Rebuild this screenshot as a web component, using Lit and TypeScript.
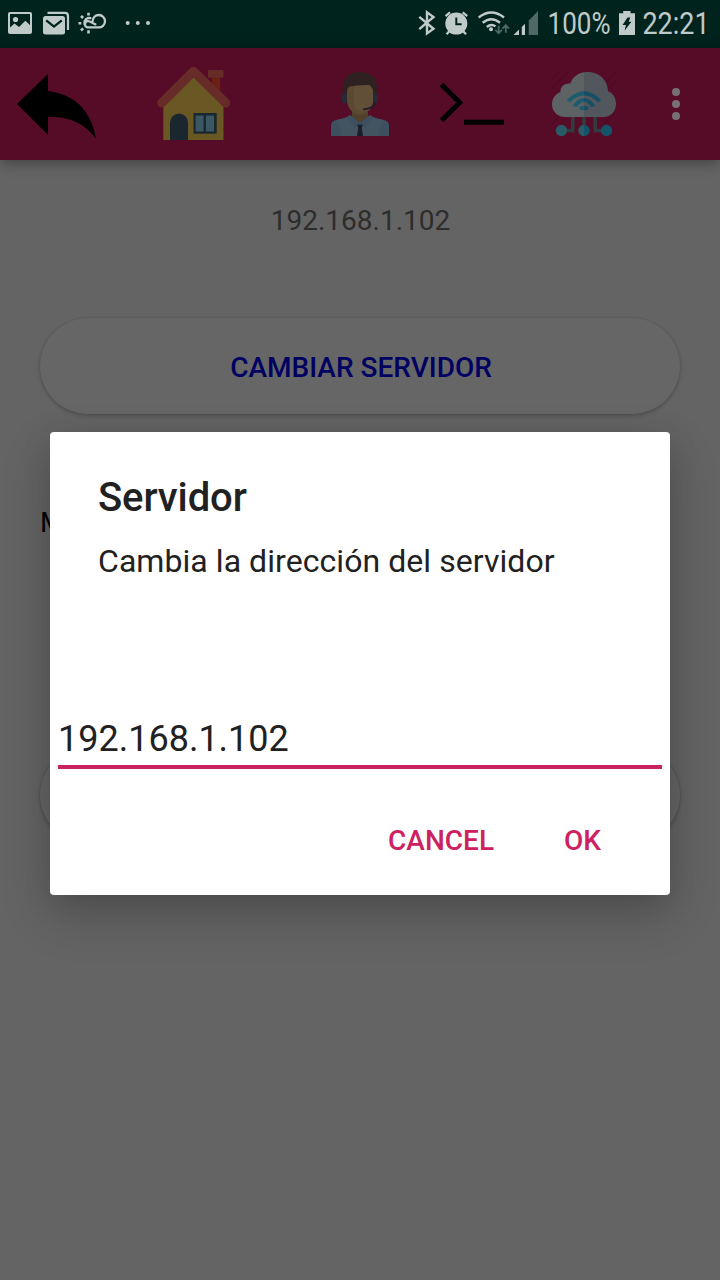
import { LitElement, html, svg, css } from "lit";
import { customElement, state } from "lit/decorators.js";

@customElement("status-bar")
class StatusBar extends LitElement {
  static styles = css`
    :host { display: block; height: 48px; background: #00231d; }
    .row { display: flex; justify-content: space-between; height: 48px; }
    svg { display: block; }
    text { font-family: Roboto, sans-serif; font-size: 30.5px; fill: #c0cbc9; }
  `;
  render() {
    return html`<div class="row">
      <svg width="160" height="48" viewBox="0 0 160 48" fill="#c0cbc9">
        <path fill-rule="evenodd" d="M10 12H30Q32 12 32 14V32Q32 34 30 34H10Q8 34 8 32V14Q8 12 10 12ZM10 14V27.5L14.5 23.5L19 27L25.3 20.8L30 25V14Z"/>
        <circle cx="15.5" cy="19.5" r="2.6"/>
        <path fill="none" stroke="#c0cbc9" stroke-width="2.2" d="M47.5 12.8H65Q68 12.8 68 16V30"/>
        <rect x="43" y="16" width="22" height="18.5" rx="2.5"/>
        <path fill="none" stroke="#00231d" stroke-width="2.3" d="M46.2 20.3L54 26.6L61.8 20.3"/>
        <path fill="none" stroke="#c0cbc9" stroke-width="2.3" stroke-linecap="round" d="M92.6 21.2A6.2 6.2 0 1 1 98.4 27.4H88A3.1 3.1 0 0 1 88 21.2C90.8 21.2 92 23.3 95.4 24.3M84.5 24A4.8 4.8 0 0 1 90.4 18.2"/>
        <path stroke="#c0cbc9" stroke-width="2.6" d="M88.5 12.8V15.6M81 15.9L83.1 18M78.5 23.3H81.3M81 30.5L83.1 28.4M88.5 30.3V33.4"/>
        <circle cx="127.7" cy="23" r="2"/><circle cx="137.8" cy="23" r="2"/><circle cx="148" cy="23" r="2"/>
      </svg>
      <svg width="310" height="48" viewBox="410 0 310 48" fill="#c0cbc9">
        <path fill="none" stroke="#c0cbc9" stroke-width="2.4" d="M419.3 16.8L433.5 28.8L427 33.5V12.3L433.5 17L419.3 29.2"/>
        <circle cx="456.3" cy="23.6" r="11"/>
        <path stroke="#c0cbc9" stroke-width="2.3" d="M445.5 16.2L450 12.4M467.2 16.2L462.7 12.4M449.5 31L446.6 34.3M463 31L466 34.3"/>
        <path fill="none" stroke="#00231d" stroke-width="2" d="M456.3 17.5V24.3H461.7"/>
        <path fill="none" stroke="#c0cbc9" stroke-width="2.4" d="M478.7 17.5Q491.3 7.6 504 17.5M482.7 22.7Q491.3 15.6 500 22.7M486.8 27Q491.3 23.2 495.5 26.4"/>
        <circle cx="491" cy="29.3" r="2"/>
        <path fill="none" stroke="#4e6763" stroke-width="1.8" d="M498.7 25.8V33M495.3 29.8L498.7 33.3L502 29.8M505.8 32.7V25.2M502.5 28.7L505.8 25.1L509 28.7"/>
        <path fill="#506964" d="M528.7 20.5L538 11V35H528.7Z"/>
        <path d="M513.5 35L519 29.6V35ZM521.8 27L525 23.8V35H521.8Z"/>
        <text x="547.5" y="34" textLength="63" lengthAdjust="spacingAndGlyphs">100%</text>
        <path d="M619 13.2H623.2V11H630.5V13.2H635V35H619Z"/>
        <path fill="#00231d" d="M627.5 17.5H630.3L628.7 21.8H631.4L624.5 30.7L626 25H622.6Z"/>
        <text x="642.5" y="34" textLength="67" lengthAdjust="spacingAndGlyphs">22:21</text>
      </svg>
    </div>`;
  }
}

/* One side of the two-tone cloud, clipped at its vertical centre line. */
const cloudHalf = (side: string, body: string, wave: string, node: string) => svg`
  <g clip-path="url(#${side})">
    <path fill=${body} d="M565 117C557 117 552 111 552 104.5C552 98 556 93.5 560.5 92C560 87 564 83.5 570.5 83.3C573 76 580 72 588 72C599 72 608 80.5 608 91.3C613 93 616 98 616 104C616 111 611 117 603.5 117Z"/>
    <path fill="none" stroke=${wave} stroke-width="4" d="M568.2 101.2Q584 85.5 599.8 101.2M574.4 106.4Q584 93.5 593.6 106.4"/>
    <ellipse cx="584" cy="108" rx="4.8" ry="2.2" fill=${wave}/>
    <circle cx="584" cy="130.5" r="5.7" fill=${node}/>
  </g>`;

@customElement("tool-bar")
class ToolBar extends LitElement {
  static styles = css`
    :host { display: block; height: 112px; background: #560b26; box-shadow: 0 4px 10px rgba(0,0,0,.22), 0 2px 18px rgba(0,0,0,.1); }
    .row { display: flex; }
    svg { display: block; }
  `;
  render() {
    return html`<div class="row">
      <svg width="120" height="112" viewBox="0 48 120 112">
        <path d="M17 104L48 74V91C73 94 91 109 96 138.5C82 121 68 117 48 116.7V134.7Z"/>
      </svg>
      <svg width="160" height="112" viewBox="120 48 160 112">
        <path fill="#6a2015" d="M212 76H220.3V94H212Z"/>
        <rect x="208" y="70" width="15.5" height="7.8" rx=".8" fill="#672c27"/>
        <path fill="#695724" d="M163.3 101L193.5 72L223.5 101V140H163.3Z"/>
        <path fill="none" stroke="#672c27" stroke-width="9" stroke-linecap="round" stroke-linejoin="round" d="M161.7 103L193.5 71.3L225.8 103"/>
        <path fill="#1a272f" d="M170 140V122.5A9 9 0 0 1 188 122.5V140Z"/>
        <path fill="#1a272f" d="M193.5 113H216.7V133.7H193.5Z"/>
        <path fill="#3a5763" d="M195.6 115.5H203.6V131.5H195.6ZM206 115.5H214V131.5H206Z"/>
      </svg>
      <svg width="140" height="112" viewBox="280 48 140 112">
        <path fill="#2f2122" d="M342.5 97V90C342.5 77 350 72 360 72S377.5 77 377.5 90V97Z"/>
        <rect x="342" y="93.5" width="6" height="10" rx="2.5" fill="#272a36"/>
        <rect x="372" y="93.5" width="6" height="10" rx="2.5" fill="#272a36"/>
        <path fill="#523f2c" d="M352 108H368V120L360 125L352 120Z"/>
        <path fill="#5b4931" d="M347 92Q347 86 352 86L369 85Q373 88 373 92V101C373 108 366 115 360 115S347 108 347 101Z"/>
        <path fill="#614f38" d="M354 86L369 85Q373 88 373 92V101C373 107 367 111.5 362 111.5S354 108 354 103Z"/>
        <path fill="none" stroke="#211e25" stroke-width="1.8" d="M375.3 102Q374 108.8 363 109.3"/>
        <path fill="#435461" d="M331 136V126Q331 121.5 336 120L346 117.5L350 115L360 123L370 115L374 117.5L384 120Q389 121.5 389 126V136Z"/>
        <path fill="#3c5060" d="M331 136V126Q331 122 335 120.6Q341 126 341 136ZM389 136V126Q389 122 385 120.6Q379 126 379 136ZM350 115L347.5 119L355 127.5L360 123ZM370 115L372.5 119L365 127.5L360 123Z"/>
        <path fill="#1b1e2a" d="M357 124.5H363L361.8 127.5L363 136H357L358.2 127.5Z"/>
      </svg>
      <svg width="100" height="112" viewBox="420 48 100 112">
        <path fill="none" stroke="#000" stroke-width="5" d="M441.5 84.5L459.7 102.5L441.5 120.5"/>
        <path d="M464 119.8H504V124.8H464Z"/>
      </svg>
      <svg width="120" height="112" viewBox="520 48 120 112">
        <defs>
          <clipPath id="left"><path d="M540 60H584V140H540Z"/></clipPath>
          <clipPath id="right"><path d="M584 60H630V140H584Z"/></clipPath>
        </defs>
        <path fill="none" stroke="#4d0b22" stroke-width="1.2" d="M552 79L559 72M552 88L568 72M606 82L616 72M608 89L616 81M552 124L558 118M604 124L614 114"/>
        <path fill="none" stroke="#343a40" stroke-width="3.6" d="M572.8 116V130.5H562M584 116V130M595.2 116V130.5H606"/>
        ${cloudHalf("left", "#5d6264", "#1d5c6f", "#2a5a66")}
        ${cloudHalf("right", "#52575e", "#194f64", "#14526a")}
        <circle cx="561.5" cy="130.5" r="5.7" fill="#2a5a66"/>
        <circle cx="606.5" cy="130.5" r="5.7" fill="#14526a"/>
      </svg>
      <svg width="80" height="112" viewBox="640 48 80 112" fill="#777074">
        <circle cx="676" cy="92" r="4"/><circle cx="676" cy="104" r="4"/><circle cx="676" cy="116" r="4"/>
      </svg>
    </div>`;
  }
}

@customElement("app-root")
class AppRoot extends LitElement {
  static styles = css`
    :host {
      display: flex; flex-direction: column; position: relative; width: 720px; height: 1280px;
      overflow: hidden; background: #646464; font-family: Roboto, sans-serif;
    }
    .page { display: flex; flex-direction: column; padding: 44px 40px 0; }
    .address { font-size: 28px; line-height: 33px; text-align: center; color: #2d2d2d; padding-left: 1px; }
    .pill {
      height: 96px; border-radius: 48px; background: #666; margin-top: 81px; flex: none;
      display: flex; align-items: center; justify-content: center;
      font-size: 28px; font-weight: 500; color: #000062; padding: 2px 0 0 2px; box-sizing: border-box;
      box-shadow: 0 2px 4px rgba(0,0,0,.2), 0 0 2px rgba(0,0,0,.12);
    }
    .label { font-size: 28px; line-height: 33px; color: #000; margin-top: 92px; }
    .second { margin-top: 208px; }
    .dialog {
      position: absolute; left: 50px; top: 432px; width: 620px; height: 463px; box-sizing: border-box;
      background: #fff; border-radius: 4px; display: flex; flex-direction: column; color: #212121;
      box-shadow: 0 20px 50px rgba(0,0,0,.2), 0 4px 30px rgba(0,0,0,.1);
    }
    .title { margin: 42px 48px 0; font-size: 40px; line-height: 47px; font-weight: 500; letter-spacing: -.1px; }
    .message { margin: 21px 48px 0; font-size: 32px; line-height: 38px; white-space: nowrap; letter-spacing: .06px; }
    .field {
      margin: 137px 8px 0; height: 52px; box-sizing: border-box; padding: 1px 0 0;
      border-bottom: 4px solid #c8235f; font-size: 36px; line-height: 42px;
    }
    .actions { display: flex; justify-content: flex-end; gap: 70px; padding: 55px 69px 0 0; font-size: 28px; line-height: 33px; font-weight: 500; color: #cd2160; }
  `;

  @state() private server = "192.168.1.102";

  render() {
    return html`
      <status-bar></status-bar>
      <tool-bar></tool-bar>
      <main class="page">
        <div class="address">${this.server}</div>
        <div class="pill">CAMBIAR SERVIDOR</div>
        <div class="label">M</div>
        <div class="pill second"></div>
      </main>
      <section class="dialog">
        <div class="title">Servidor</div>
        <div class="message">Cambia la dirección del servidor</div>
        <div class="field">${this.server}</div>
        <div class="actions"><span>CANCEL</span><span>OK</span></div>
      </section>
    `;
  }
}
